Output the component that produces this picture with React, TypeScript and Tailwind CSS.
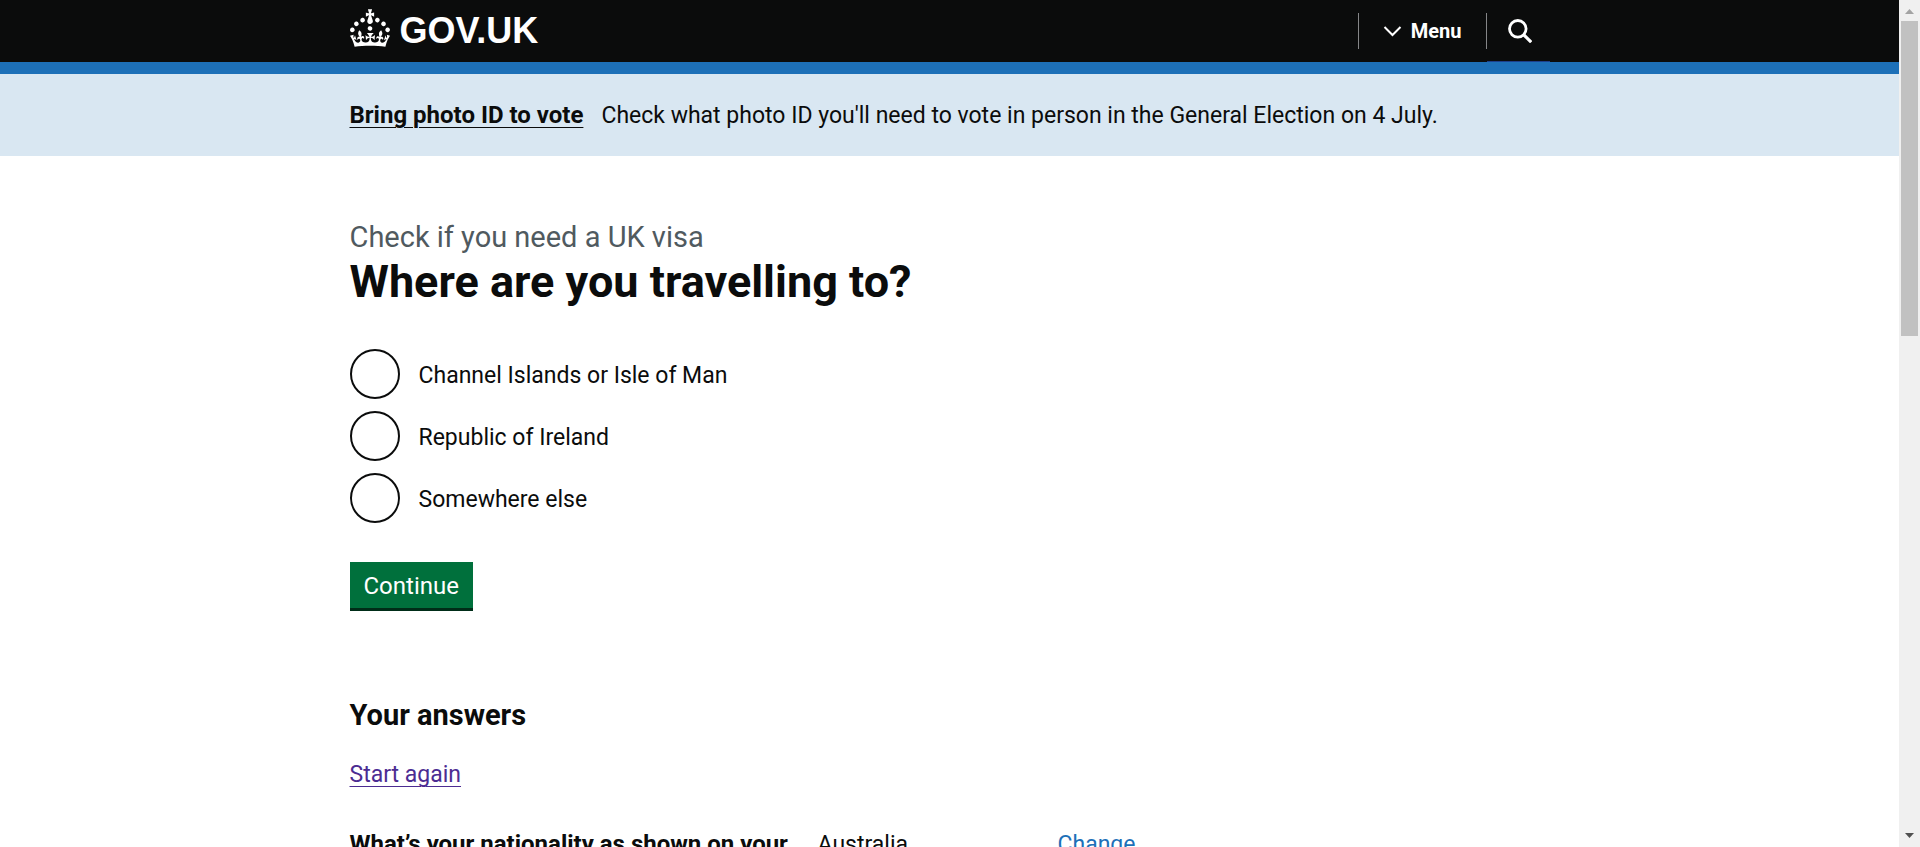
import React from "react";

const CROWN =
  "M22.6 10.4c-1 .4-2-.1-2.4-1-.4-.9.1-2 1-2.4.9-.4 2 .1 2.4 1s-.1 2-1 2.4m-5.9 6.7c-.9.4-2-.1-2.4-1-.4-.9.1-2 1-2.4.9-.4 2 .1 2.4 1s-.1 2-1 2.4m10.8-3.7c-1 .4-2-.1-2.4-1-.4-.9.1-2 1-2.4.9-.4 2 .1 2.4 1s0 2-1 2.4m3.3 4.8c-1 .4-2-.1-2.4-1-.4-.9.1-2 1-2.4.9-.4 2 .1 2.4 1s-.1 2-1 2.4M17 4.7l2.3 1.2V2.5l-2.3.7-.2-.2.9-3h-3.4l.9 3-.2.2c-.1.1-2.3-.7-2.3-.7v3.4L15 4.7c.1.1.1.2.2.2l-1.3 4c-.1.2-.1.4-.1.6 0 1.1.8 2 1.9 2.2h.7c1-.2 1.9-1.1 1.9-2.1 0-.2 0-.4-.1-.6l-1.3-4c-.1-.2 0-.2.1-.3m-7.6 5.7c.9.4 2-.1 2.4-1 .4-.9-.1-2-1-2.4-.9-.4-2 .1-2.4 1s0 2 1 2.4m-5 3c.9.4 2-.1 2.4-1 .4-.9-.1-2-1-2.4-.9-.4-2 .1-2.4 1s.1 2 1 2.4m-3.2 4.8c.9.4 2-.1 2.4-1 .4-.9-.1-2-1-2.4-.9-.4-2 .1-2.4 1s0 2 1 2.4m14.8 11c4.4 0 8.6.3 12.3.8 1.1-4.5 2.4-7 3.7-8.8l-2.5-.9c.2 1.3.3 1.9 0 2.7-.4-.4-.8-1.1-1.1-2.3l-1.2 4c.7-.5 1.3-.8 2-.9-1.1 2.5-2.6 3.1-3.5 3-1.1-.2-1.7-1.2-1.5-2.1.3-1.2 1.5-1.5 2.1-.1 1.1-2.3-.8-3-2-2.3 1.9-1.9 2.1-3.5.6-5.6-2.1 1.6-2.1 3.2-1.2 5.5-1.2-1.4-3.2-.6-2.5 1.6.9-1.4 2.1-.5 1.9.8-.2 1.1-1.7 2.1-3.5 1.9-2.7-.2-2.9-2.1-2.9-3.6.7-.1 1.9.5 2.9 1.9l.4-4.3c-1.1 1.1-2.1 1.4-3.2 1.4.4-1.2 2.1-3 2.1-3h-5.4s1.7 1.9 2.1 3c-1.1 0-2.1-.2-3.2-1.4l.4 4.3c1-1.4 2.2-2 2.9-1.9-.1 1.5-.2 3.4-2.9 3.6-1.9.2-3.4-.8-3.5-1.9-.2-1.3 1-2.2 1.9-.8.7-2.3-1.2-3-2.5-1.6.9-2.2.9-3.9-1.2-5.5-1.5 2-1.3 3.7.6 5.6-1.2-.7-3.1 0-2 2.3.6-1.4 1.8-1.1 2.1.1.2.9-.3 1.9-1.5 2.1-.9.2-2.4-.5-3.5-3 .6 0 1.2.3 2 .9l-1.2-4c-.3 1.1-.7 1.9-1.1 2.3-.3-.8-.2-1.4 0-2.7l-2.9.9C1.3 23 2.6 25.5 3.7 30c3.7-.5 7.9-.8 12.3-.8";

const destinations = [
  { id: "channel-islands", label: "Channel Islands or Isle of Man" },
  { id: "ireland", label: "Republic of Ireland" },
  { id: "elsewhere", label: "Somewhere else" },
];

function Header() {
  return (
    <header className="border-b-12 border-[#1d70b8] bg-[#0b0c0c] text-white">
      <div className="mx-auto flex h-[62px] max-w-[1200px] justify-between">
        <a href="#" className="flex items-center gap-[10px] pb-1.5">
          <svg className="h-[38px] w-10" viewBox="0 0 32 30" fill="currentColor" aria-hidden="true">
            <path d={CROWN} />
          </svg>
          <span className="pt-1.5 font-['Liberation_Sans',sans-serif] text-4xl leading-10 font-bold">GOV.UK</span>
        </a>
        <nav className="flex items-center">
          <button type="button" className="flex h-9 items-center gap-2 border-x border-[#858688] px-6 text-xl font-bold">
            <svg className="h-5 w-5" viewBox="0 0 20 20" fill="none" stroke="currentColor" strokeWidth="2" aria-hidden="true">
              <path d="M1.5 6l8 8 8-8" />
            </svg>
            Menu
          </button>
          <button type="button" aria-label="Search GOV.UK" className="flex h-full w-[63px] items-center border-b border-[#1d3f8a] pl-[21px]">
            <svg className="h-6 w-6" viewBox="0 0 24 24" fill="none" stroke="currentColor" strokeWidth="2.8" aria-hidden="true">
              <circle cx="9.8" cy="9.8" r="8.3" />
              <path d="M15.8 15.8l7.4 7.4" strokeWidth="3.2" />
            </svg>
          </button>
        </nav>
      </div>
    </header>
  );
}

function ElectionBanner() {
  return (
    <section className="bg-[#d9e7f2] pt-[26px] pb-[25px]">
      <p className="mx-auto flex max-w-[1200px] items-baseline gap-[18px] text-[23px] leading-[30px]">
        <a href="#" className="text-2xl leading-[30px] font-bold underline decoration-1 underline-offset-4">Bring photo ID to vote</a>
        <span>Check what photo ID you'll need to vote in person in the General Election on 4 July.</span>
      </p>
    </section>
  );
}

function Question() {
  return (
    <form>
      <fieldset>
        <legend>
          <span className="block text-[29px] leading-9 text-[#505a5f]">Check if you need a UK visa</span>
          <h1 className="text-[45px] leading-[54px] font-bold">Where are you travelling to?</h1>
        </legend>
        <div className="mt-10 flex flex-col items-start gap-3">
          {destinations.map(({ id, label }) => (
            <label key={id} htmlFor={id} className="flex items-center gap-[19px] text-[23px] leading-[30px]">
              <input
                id={id}
                type="radio"
                name="destination"
                className="h-[50px] w-[50px] appearance-none rounded-full border-2 border-[#0b0c0c] bg-white checked:border-[16px]"
              />
              <span className="pt-1">{label}</span>
            </label>
          ))}
        </div>
      </fieldset>
      <button type="button" className="mt-[39px] flex h-[46px] items-center bg-[#00703c] px-[14px] pt-0.5 text-2xl text-white shadow-[0_3px_0_#002d18]">
        Continue
      </button>
    </form>
  );
}

function Answers() {
  return (
    <section className="mt-[89px]">
      <h2 className="text-[29px] leading-9 font-bold">Your answers</h2>
      <p className="mt-[27px] text-[23px] leading-[30px]">
        <a href="#" className="text-[#4c2c92] underline decoration-1 underline-offset-4">Start again</a>
      </p>
      <dl className="mt-[39px] grid grid-cols-[468px_240px_1fr] items-baseline text-[23px] leading-[30px]">
        <dt className="text-2xl leading-[30px] font-bold">
          What’s your nationality as shown on your
          <br />
          passport or travel document?
        </dt>
        <dd>Australia</dd>
        <dd>
          <a href="#" className="text-[#1d70b8] underline decoration-1 underline-offset-4">Change</a>
        </dd>
      </dl>
    </section>
  );
}

function Scrollbar() {
  return (
    <div className="flex w-[21px] shrink-0 flex-col items-center bg-[#f0f0f0]" aria-hidden="true">
      <svg className="h-[21px] w-[17px] shrink-0" viewBox="0 0 17 21" fill="#a3a3a3">
        <path d="M4 14l4.5-5 4.5 5z" />
      </svg>
      <div className="h-[315px] w-[17px] bg-[#c1c1c1]" />
      <svg className="mt-auto h-[21px] w-[17px] shrink-0" viewBox="0 0 17 21" fill="#505050">
        <path d="M4 7l4.5 5L13 7z" />
      </svg>
    </div>
  );
}

export default function App() {
  return (
    <div className="flex h-screen bg-white font-[Roboto,'Liberation_Sans',sans-serif] text-[#0b0c0c]">
      <div className="min-w-0 flex-1 overflow-hidden">
        <Header />
        <ElectionBanner />
        <main className="mx-auto max-w-[1200px] pt-[63px]">
          <Question />
          <Answers />
        </main>
      </div>
      <Scrollbar />
    </div>
  );
}
